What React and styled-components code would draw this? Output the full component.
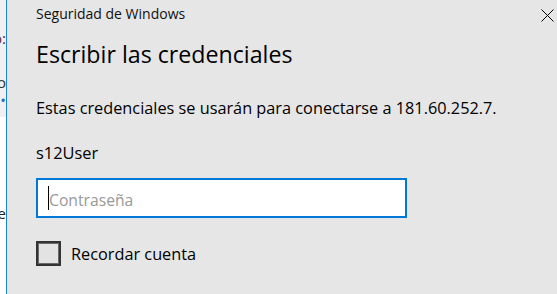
import React from "react";
import styled, { createGlobalStyle } from "styled-components";

const GlobalStyle = createGlobalStyle`
  html, body {
    margin: 0;
    padding: 0;
    background: #ffffff;
  }
  body {
    font-family: "Open Sans", "Noto Sans", "Liberation Sans", sans-serif;
    -webkit-font-smoothing: antialiased;
  }
`;

const Screen = styled.div`
  display: flex;
  width: 557px;
  height: 294px;
  overflow: hidden;
`;

// the window behind the dialog, only a few pixels of it show
const BackWindow = styled.div`
  width: 6px;
  display: flex;
  flex-direction: column;
  flex-shrink: 0;
`;

const BackTop = styled.div`
  height: 117px;
  background: #f0f0f0;
  position: relative;
`;

const BackBottom = styled.div`
  flex: 1;
  background: #ffffff;
  position: relative;
`;

const Fragment = styled.div`
  position: absolute;
  right: 0;
  top: ${(p) => p.top}px;
  width: 6px;
  display: flex;
  justify-content: flex-end;
  overflow: hidden;
  white-space: nowrap;
  font-size: 15px;
  line-height: 16px;
  color: ${(p) => p.color || "#222"};
`;

const Dialog = styled.div`
  flex: 1;
  background: #e6e6e6;
  border-left: 1px solid #1883e0;
  padding-left: 29px;
  display: flex;
  flex-direction: column;
`;

const Header = styled.div`
  display: flex;
  justify-content: space-between;
  align-items: flex-start;
  padding-top: 4px;
  padding-right: 3px;
`;

const Caption = styled.div`
  font-size: 14px;
  line-height: 20px;
  color: #111;
`;

const CloseIcon = styled.svg`
  width: 13px;
  height: 13px;
  margin-top: 5px;
`;

const Title = styled.h1`
  margin: 14px 0 0;
  font-size: 23.2px;
  font-weight: 400;
  line-height: 32px;
  color: #000;
`;

const Text = styled.p`
  margin: ${(p) => p.gap}px 0 0;
  font-size: ${(p) => p.size || 16.3}px;
  line-height: 20px;
  color: #000;
`;

const PasswordBox = styled.div`
  box-sizing: border-box;
  margin-top: 15px;
  width: 371px;
  height: 40px;
  background: #fff;
  border: 2px solid #0078d7;
  display: flex;
  align-items: center;
  padding: 4px 0 0 10px;
`;

const Caret = styled.span`
  width: 1px;
  height: 24px;
  background: #000;
  margin-top: -4px;
`;

const Placeholder = styled.span`
  font-size: 15.7px;
  line-height: 20px;
  color: #999;
`;

const CheckRow = styled.label`
  margin-top: 23px;
  display: flex;
  align-items: center;
  gap: 10px;
  height: 25px;
`;

const CheckBox = styled.span`
  box-sizing: border-box;
  width: 25px;
  height: 25px;
  border: 2px solid #333;
  box-shadow: inset 0 0 0 1px #6a6a6a;
  background: #e3e3e3;
`;

const CheckLabel = styled.span`
  font-size: 16.3px;
  line-height: 20px;
  color: #000;
`;

export default function App() {
  return (
    <Screen>
      <GlobalStyle />
      <BackWindow>
        <BackTop>
          <Fragment top={30} color="#6b2430">
            <span>Usuario:</span>
          </Fragment>
          <Fragment top={74} color="#333">
            <span>Dominio</span>
          </Fragment>
          <Fragment top={92} color="#1e6fc8">
            <span>•</span>
          </Fragment>
        </BackTop>
        <BackBottom>
          <Fragment top={88} color="#222">
            <span>Nombre</span>
          </Fragment>
        </BackBottom>
      </BackWindow>
      <Dialog>
        <Header>
          <Caption>Seguridad de Windows</Caption>
          <CloseIcon viewBox="0 0 13 13">
            <path d="M0.5 0.5 L12.5 12.5 M12.5 0.5 L0.5 12.5" stroke="#000" strokeWidth="1" fill="none" />
          </CloseIcon>
        </Header>
        <Title>Escribir las credenciales</Title>
        <Text gap={28}>Estas credenciales se usarán para conectarse a 181.60.252.7.</Text>
        <Text gap={25} size={16.4}>s12User</Text>
        <PasswordBox>
          <Caret />
          <Placeholder>Contraseña</Placeholder>
        </PasswordBox>
        <CheckRow>
          <CheckBox />
          <CheckLabel>Recordar cuenta</CheckLabel>
        </CheckRow>
      </Dialog>
    </Screen>
  );
}
